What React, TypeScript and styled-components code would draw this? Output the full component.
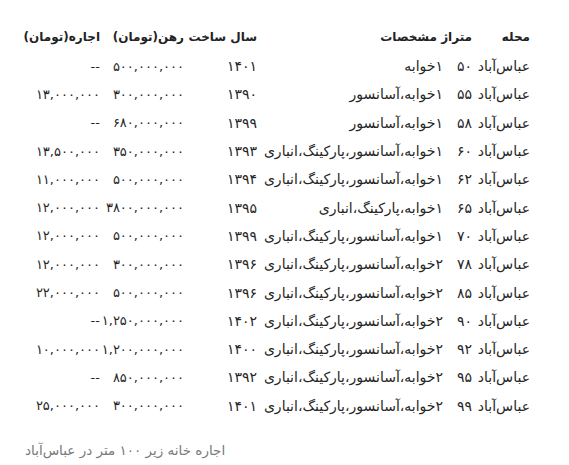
import React from "react";
import styled, { createGlobalStyle } from "styled-components";

const Global = createGlobalStyle`
  html, body { margin: 0; padding: 0; background: #fff; }
  body { font-family: "DejaVu Sans", "Noto Sans", sans-serif; color: #222; }
`;

const Page = styled.div`
  width: 569px;
  height: 465px;
  box-sizing: border-box;
  padding: 22px 35px 0 20px;
  direction: rtl;
  display: flex;
  flex-direction: column;
`;

const Table = styled.table`
  border-collapse: collapse;
  table-layout: fixed;
  width: 514px;
  font-size: 14px;
`;

const Head = styled.th<{ $gap?: boolean }>`
  font-weight: bold;
  text-align: right;
  padding: 0 ${(p) => (p.$gap ? "10px" : "4px")} 0 0;
  height: 30px;
  white-space: nowrap;
  color: #222;
  font-size: 12px;
`;

const Cell = styled.td<{ $num?: boolean }>`
  text-align: right;
  padding: 0 4px 0 0;
  height: 28.3px;
  white-space: nowrap;
  color: #262626;
  font-size: ${(p) => (p.$num ? "13px" : "14px")};
`;

const Caption = styled.div`
  margin-top: 22px;
  text-align: left;
  padding-left: 5px;
  font-size: 13.5px;
  color: #7a7a7a;
`;

type Row = [string, string, string, string, string, string];

const rows: Row[] = [
  ["عباس‌آباد", "۵۰", "۱خوابه", "۱۴۰۱", "۵۰۰,۰۰۰,۰۰۰", "--"],
  ["عباس‌آباد", "۵۵", "۱خوابه،آسانسور", "۱۳۹۰", "۳۰۰,۰۰۰,۰۰۰", "۱۳,۰۰۰,۰۰۰"],
  ["عباس‌آباد", "۵۸", "۱خوابه،آسانسور", "۱۳۹۹", "۶۸۰,۰۰۰,۰۰۰", "--"],
  ["عباس‌آباد", "۶۰", "۱خوابه،آسانسور،پارکینگ،انباری", "۱۳۹۳", "۳۵۰,۰۰۰,۰۰۰", "۱۳,۵۰۰,۰۰۰"],
  ["عباس‌آباد", "۶۲", "۱خوابه،آسانسور،پارکینگ،انباری", "۱۳۹۴", "۵۰۰,۰۰۰,۰۰۰", "۱۱,۰۰۰,۰۰۰"],
  ["عباس‌آباد", "۶۵", "۱خوابه،پارکینگ،انباری", "۱۳۹۵", "۳۸۰۰,۰۰۰,۰۰۰", "۱۲,۰۰۰,۰۰۰"],
  ["عباس‌آباد", "۷۰", "۱خوابه،آسانسور،پارکینگ،انباری", "۱۳۹۹", "۵۰۰,۰۰۰,۰۰۰", "۱۲,۰۰۰,۰۰۰"],
  ["عباس‌آباد", "۷۸", "۲خوابه،آسانسور،پارکینگ،انباری", "۱۳۹۶", "۳۰۰,۰۰۰,۰۰۰", "۱۲,۰۰۰,۰۰۰"],
  ["عباس‌آباد", "۸۵", "۲خوابه،آسانسور،پارکینگ،انباری", "۱۳۹۶", "۵۰۰,۰۰۰,۰۰۰", "۲۲,۰۰۰,۰۰۰"],
  ["عباس‌آباد", "۹۰", "۲خوابه،آسانسور،پارکینگ،انباری", "۱۴۰۲", "۱,۲۵۰,۰۰۰,۰۰۰", "--"],
  ["عباس‌آباد", "۹۲", "۲خوابه،آسانسور،پارکینگ،انباری", "۱۴۰۰", "۱,۲۰۰,۰۰۰,۰۰۰", "۱۰,۰۰۰,۰۰۰"],
  ["عباس‌آباد", "۹۵", "۲خوابه،آسانسور،پارکینگ،انباری", "۱۳۹۲", "۸۵۰,۰۰۰,۰۰۰", "--"],
  ["عباس‌آباد", "۹۹", "۲خوابه،آسانسور،پارکینگ،انباری", "۱۴۰۱", "۳۰۰,۰۰۰,۰۰۰", "۲۵,۰۰۰,۰۰۰"],
];

const widths = [58, 29, 186, 73, 84, 84];
const heads = ["محله", "متراژ", "مشخصات", "سال ساخت", "رهن(تومان)", "اجاره(تومان)"];

export default function App() {
  return (
    <>
      <Global />
      <Page>
        <Table>
          <colgroup>
            {widths.map((w, i) => (
              <col key={i} style={{ width: w }} />
            ))}
          </colgroup>
          <thead>
            <tr>
              {heads.map((h, i) => (
                <Head key={h} $gap={i === 2}>
                  {h}
                </Head>
              ))}
            </tr>
          </thead>
          <tbody>
            {rows.map((r, i) => (
              <tr key={i}>
                {r.map((c, j) => (
                  <Cell key={j} $num={j >= 4}>
                    {c}
                  </Cell>
                ))}
              </tr>
            ))}
          </tbody>
        </Table>
        <Caption>اجاره خانه زیر ۱۰۰ متر در عباس‌آباد</Caption>
      </Page>
    </>
  );
}
